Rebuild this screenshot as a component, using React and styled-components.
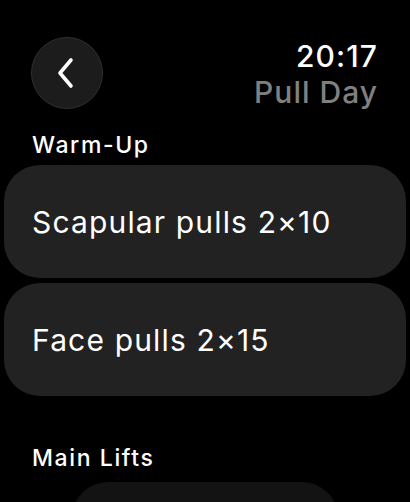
import React from 'react';
import styled, { createGlobalStyle } from 'styled-components';

const GlobalStyle = createGlobalStyle`
  html, body {
    margin: 0;
    padding: 0;
    background: #000;
  }
  body {
    font-family: 'Inter', 'Noto Sans', sans-serif;
    color: #fff;
    -webkit-font-smoothing: antialiased;
  }
`;

const Screen = styled.div`
  width: 410px;
  height: 502px;
  overflow: hidden;
  background: #000;
`;

const Header = styled.header`
  display: flex;
  justify-content: space-between;
  align-items: flex-start;
  padding: 37px 33px 0 31px;
`;

const BackButton = styled.button`
  width: 72px;
  height: 72px;
  border-radius: 50%;
  background: #1c1c1c;
  border: 1.5px solid #303030;
  display: flex;
  align-items: center;
  justify-content: center;
  padding: 0 2px 0 0;
  cursor: pointer;
`;

const Status = styled.div`
  display: flex;
  flex-direction: column;
  align-items: flex-end;
  padding-top: 1px;
`;

const Clock = styled.div`
  font-size: 30px;
  font-weight: 500;
  line-height: 36px;
  letter-spacing: 1.1px;
  margin-right: -1px;
`;

const Title = styled.div`
  font-size: 30px;
  font-weight: 500;
  line-height: 36px;
  letter-spacing: 1px;
  margin-right: -1px;
  color: #808080;
`;

const SectionLabel = styled.h2`
  margin: 0;
  padding: ${({ $top }) => $top}px 32px 0;
  font-size: 23px;
  font-weight: 500;
  line-height: 28px;
  letter-spacing: 1.6px;
`;

const List = styled.div`
  display: flex;
  flex-direction: column;
  gap: 5px;
  padding: ${({ $inset }) => ($inset ? '10px 72px 0' : '6px 4px 0')};
`;

const Card = styled.div`
  height: 113px;
  border-radius: 36px;
  background: ${({ $dim }) => ($dim ? '#131313' : '#222')};
  display: flex;
  align-items: center;
  padding: 0 28px;
  font-size: 30px;
  font-weight: 400;
  letter-spacing: 1.15px;
`;

const Chevron = () => (
  <svg width="20" height="32" viewBox="0 0 20 32" fill="none">
    <path
      d="M15 3 L4 16 L15 29"
      stroke="#fff"
      strokeWidth="3.6"
      strokeLinecap="round"
      strokeLinejoin="round"
    />
  </svg>
);

const warmUp = ['Scapular pulls 2×10', 'Face pulls 2×15'];

export default function App() {
  return (
    <Screen>
      <GlobalStyle />
      <Header>
        <BackButton aria-label="Back">
          <Chevron />
        </BackButton>
        <Status>
          <Clock>20:17</Clock>
          <Title>Pull Day</Title>
        </Status>
      </Header>

      <SectionLabel $top={21}>Warm-Up</SectionLabel>
      <List>
        {warmUp.map((item) => (
          <Card key={item}>{item}</Card>
        ))}
      </List>

      <SectionLabel $top={48}>Main Lifts</SectionLabel>
      <List $inset>
        <Card $dim />
      </List>
    </Screen>
  );
}
